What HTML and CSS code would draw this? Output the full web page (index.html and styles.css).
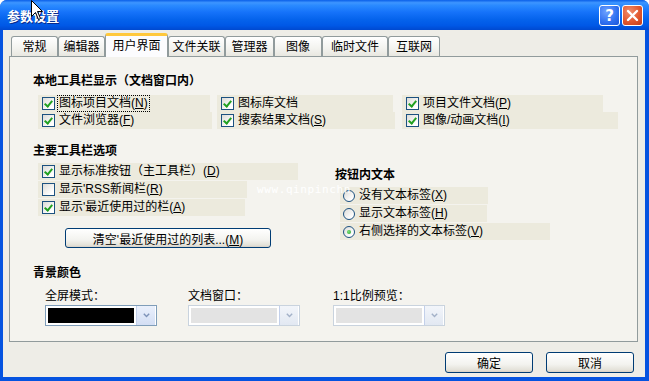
FILE: index.html
```html
<!DOCTYPE html>
<html lang="zh-CN">
<head>
    <meta charset="UTF-8">
    <title>参数设置</title>
    <link rel="stylesheet" href="styles.css">
</head>
<body>
    <div class="window">
        <div class="titlebar">
            <span class="title">参数设置</span>
            <div class="caption-btns">
                <span class="cap-btn help">?</span>
                <span class="cap-btn close">
                    <svg width="13" height="13" viewBox="0 0 13 13"><path d="M2 2 L11 11 M11 2 L2 11" stroke="#fff" stroke-width="2.4" stroke-linecap="round"/></svg>
                </span>
            </div>
        </div>

        <div class="client">
            <div class="tabs">
                <div class="tab t1">常规</div>
                <div class="tab t2">编辑器</div>
                <div class="tab t3 active">用户界面</div>
                <div class="tab t4">文件关联</div>
                <div class="tab t5">管理器</div>
                <div class="tab t6">图像</div>
                <div class="tab t7">临时文件</div>
                <div class="tab t8">互联网</div>
            </div>

            <div class="pane">
                <!-- 本地工具栏 -->
                <section class="group">
                    <h2>本地工具栏显示（文档窗口内）</h2>
                    <div class="check-grid">
                        <label class="opt w172"><span class="box on"></span><span class="txt focus">图标项目文档(<u>N</u>)</span></label>
                        <label class="opt w176"><span class="box on"></span><span class="txt">图标库文档</span></label>
                        <label class="opt w201"><span class="box on"></span><span class="txt">项目文件文档(<u>P</u>)</span></label>
                        <label class="opt w174"><span class="box on"></span><span class="txt">文件浏览器(<u>F</u>)</span></label>
                        <label class="opt w178"><span class="box on"></span><span class="txt">搜索结果文档(<u>S</u>)</span></label>
                        <label class="opt w216"><span class="box on"></span><span class="txt">图像/动画文档(<u>I</u>)</span></label>
                    </div>
                </section>

                <!-- 主要工具栏 -->
                <section class="group main-group">
                    <div class="col-left">
                        <h2>主要工具栏选项</h2>
                        <div class="opt-list">
                            <label class="opt w260"><span class="box on"></span><span class="txt">显示标准按钮（主工具栏）(<u>D</u>)</span></label>
                            <label class="opt w209"><span class="box"></span><span class="txt">显示'RSS新闻栏(<u>R</u>)</span></label>
                            <label class="opt w207"><span class="box on"></span><span class="txt">显示'最近使用过的栏(<u>A</u>)</span></label>
                        </div>
                        <button class="btn clear-btn">清空'最近使用过的列表...(<u>M</u>)</button>
                    </div>
                    <div class="col-right">
                        <h2>按钮内文本</h2>
                        <div class="opt-list radios">
                            <label class="opt w148"><span class="radio"></span><span class="txt">没有文本标签(<u>X</u>)</span></label>
                            <label class="opt w147"><span class="radio"></span><span class="txt">显示文本标签(<u>H</u>)</span></label>
                            <label class="opt w210"><span class="radio on"></span><span class="txt">右侧选择的文本标签(<u>V</u>)</span></label>
                        </div>
                    </div>
                </section>

                <!-- 背景颜色 -->
                <section class="group bg-group">
                    <h2>青景颜色</h2>
                    <div class="fields">
                        <div class="field">
                            <div class="field-label">全屏模式：</div>
                            <div class="combo"><span class="swatch black"></span><span class="drop"><svg width="7" height="5" viewBox="0 0 7 5"><path d="M0.8 0.8 L3.5 3.5 L6.2 0.8" fill="none" stroke="#7d92b8" stroke-width="1.4"/></svg></span></div>
                        </div>
                        <div class="field">
                            <div class="field-label">文档窗口：</div>
                            <div class="combo disabled"><span class="swatch"></span><span class="drop"><svg width="7" height="5" viewBox="0 0 7 5"><path d="M0.8 0.8 L3.5 3.5 L6.2 0.8" fill="none" stroke="#a3b1c8" stroke-width="1.4"/></svg></span></div>
                        </div>
                        <div class="field">
                            <div class="field-label">1:1比例预览：</div>
                            <div class="combo disabled"><span class="swatch"></span><span class="drop"><svg width="7" height="5" viewBox="0 0 7 5"><path d="M0.8 0.8 L3.5 3.5 L6.2 0.8" fill="none" stroke="#a3b1c8" stroke-width="1.4"/></svg></span></div>
                        </div>
                    </div>
                </section>

                <div class="watermark">www.qinpinchn</div>
            </div>

            <div class="footer">
                <button class="btn">确定</button>
                <button class="btn">取消</button>
            </div>
        </div>

        <svg class="cursor" width="13" height="21" viewBox="0 0 13 21">
            <path d="M0.5 0.5 L0.5 16.5 L4.5 12.5 L7.5 19.5 L9.5 18.5 L6.5 11.5 L11.5 11.5 Z" fill="#fff" stroke="#000" stroke-width="1"/>
        </svg>
    </div>
</body>
</html>
```

FILE: styles.css
```css
* {
    box-sizing: border-box;
    margin: 0;
    padding: 0;
}

body {
    font-family: "Liberation Sans", "Noto Sans CJK SC", sans-serif;
    font-size: 12px;
    color: #000;
    background: #fff;
    width: 649px;
    height: 381px;
    overflow: hidden;
}

.window {
    position: relative;
    width: 649px;
    height: 381px;
    display: flex;
    flex-direction: column;
    background: #0553e0;
    border-radius: 7px 7px 0 0;
    overflow: hidden;
}

.titlebar {
    height: 30px;
    flex: none;
    display: flex;
    align-items: center;
    justify-content: space-between;
    padding: 0 6px 0 7px;
    background: linear-gradient(#0a5fe8 0%, #3d95ff 9%, #2a8aff 18%, #1673fa 40%, #0563ec 65%, #0058e6 85%, #0049d0 100%);
}

.title {
    color: #fff;
    font-weight: bold;
    font-size: 13px;
    text-shadow: 1px 1px 0 #0a2a8a;
}

.caption-btns {
    display: flex;
    gap: 2px;
    margin-top: 1px;
}

.cap-btn {
    width: 21px;
    height: 21px;
    border: 1px solid #fff;
    border-radius: 3px;
    display: flex;
    align-items: center;
    justify-content: center;
    color: #fff;
    font-weight: bold;
    font-size: 15px;
    font-family: "DejaVu Sans", sans-serif;
}

.cap-btn.help {
    background: radial-gradient(circle at 35% 30%, #6ea3ff, #2f6ff0 60%, #1c55d8);
}

.cap-btn.close {
    background: radial-gradient(circle at 35% 30%, #f08e6e, #e2582f 55%, #c23b18);
}

.client {
    flex: 1;
    margin: 0 4px 4px 3px;
    background: #eeede7;
    display: flex;
    flex-direction: column;
}

/* tabs */
.tabs {
    display: flex;
    align-items: flex-end;
    height: 26px;
    padding: 3px 0 0 8px;
    position: relative;
    z-index: 2;
}

.tab {
    height: 20px;
    border: 1px solid #919b9c;
    border-bottom: none;
    border-radius: 3px 3px 0 0;
    background: linear-gradient(#fff, #f3f3ef 60%, #e8e7e0);
    display: flex;
    align-items: center;
    justify-content: center;
    line-height: 14px;
}

.tab.active {
    height: 24px;
    margin-bottom: -1px;
    background: #fcfcfe;
    border-top: 3px solid #ffc83c;
    padding-bottom: 2px;
}

.t1 { width: 47px; }
.t2 { width: 47px; }
.t3 { width: 63px; }
.t4 { width: 57px; }
.t5 { width: 49px; }
.t6 { width: 48px; }
.t7 { width: 66px; }
.t8 { width: 52px; }

.pane {
    position: relative;
    height: 286px;
    width: 629px;
    margin-left: 6px;
    border: 1px solid #919b9c;
    background: #f4f3ee;
    padding: 16px 0 0 23px;
}

h2 {
    font-size: 12px;
    font-weight: bold;
    line-height: 16px;
}

.check-grid {
    display: grid;
    grid-template-columns: 179px 185px auto;
    grid-auto-rows: 17px;
    margin: 6px 0 0 5px;
}

.opt {
    display: flex;
    align-items: center;
    height: 17px;
    padding-left: 4px;
    background: #eceadd;
    white-space: nowrap;
}

.txt {
    margin-left: 3px;
    line-height: 15px;
    padding: 0 1px;
}

.focus {
    outline: 1px dotted #000;
    outline-offset: 0;
}

.w147 { width: 147px; }
.w148 { width: 148px; }
.w172 { width: 172px; }
.w174 { width: 174px; }
.w176 { width: 176px; }
.w178 { width: 178px; }
.w201 { width: 201px; }
.w207 { width: 207px; }
.w209 { width: 209px; }
.w210 { width: 210px; }
.w216 { width: 216px; }
.w260 { width: 260px; }

.box {
    width: 13px;
    height: 13px;
    flex: none;
    border: 1px solid #1c5180;
    background: linear-gradient(135deg, #dcdcd7, #fff 80%);
    position: relative;
}

.box.on::after {
    content: "";
    position: absolute;
    left: 3px;
    top: 1px;
    width: 3px;
    height: 6px;
    border: solid #21a121;
    border-width: 0 2px 2px 0;
    transform: rotate(40deg);
}

.radio {
    width: 12px;
    height: 12px;
    flex: none;
    border: 1px solid #1c5180;
    border-radius: 50%;
    background: linear-gradient(135deg, #dcdcd7, #fff 80%);
    position: relative;
}

.radio.on::after {
    content: "";
    position: absolute;
    left: 3px;
    top: 3px;
    width: 4px;
    height: 4px;
    border-radius: 50%;
    background: radial-gradient(circle at 40% 40%, #7ae07a, #21a121);
}

.radios .opt {
    padding-left: 3px;
}

.main-group {
    display: flex;
    margin-top: 14px;
}

.col-left {
    width: 302px;
}

.opt-list {
    display: flex;
    flex-direction: column;
    gap: 1px;
    margin: 4px 0 0 5px;
}

.col-right {
    margin-top: 24px;
}

.btn {
    font-family: inherit;
    font-size: 12px;
    height: 21px;
    width: 88px;
    border: 1px solid #003c74;
    border-radius: 3px;
    background: linear-gradient(#fff, #f3f3ef 60%, #e3e1d8 90%, #d6d0c5);
    color: #000;
}

.clear-btn {
    display: block;
    width: 206px;
    height: 20px;
    margin: 12px 0 0 32px;
}

.bg-group {
    margin-top: 17px;
}

.fields {
    display: grid;
    grid-template-columns: 143px 145px 112px;
    margin: 7px 0 0 12px;
}

.field-label {
    line-height: 16px;
    height: 16px;
}

.combo {
    margin-top: 1px;
    width: 112px;
    height: 21px;
    border: 1px solid #7f9db9;
    background: #fff;
    display: flex;
    align-items: center;
    padding: 2px 1px 2px 2px;
}

.combo.disabled {
    border-color: #c9d3de;
}

.swatch {
    flex: 1;
    height: 15px;
    background: #e3e3e3;
}

.swatch.black {
    background: #000;
}

.drop {
    width: 19px;
    height: 19px;
    margin-left: 2px;
    display: flex;
    align-items: center;
    justify-content: center;
    background: linear-gradient(#eaf0fc, #d3def4);
    border-left: 1px solid #c3d0ea;
}

.combo.disabled .drop {
    background: linear-gradient(#f2f5fa, #e2e8f2);
}

.watermark {
    position: absolute;
    left: 247px;
    top: 126px;
    font-family: "DejaVu Sans Mono", monospace;
    font-size: 11px;
    color: #fff;
    letter-spacing: 0.6px;
}

.footer {
    display: flex;
    justify-content: flex-end;
    gap: 13px;
    margin-top: 10px;
    padding-right: 11px;
}

.cursor {
    position: absolute;
    left: 31px;
    top: 0;
}
```
